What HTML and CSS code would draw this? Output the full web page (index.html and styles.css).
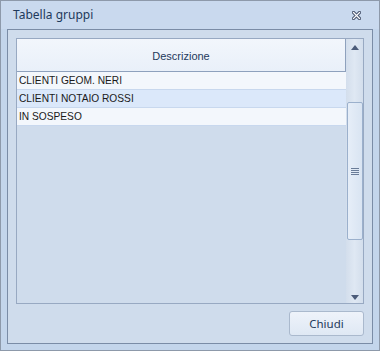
FILE: index.html
```html
<!doctype html>
<html>
	<head>
		<title>Tabella gruppi</title>
		<link rel="stylesheet" href="styles.css">
	</head>
	<body>
		<div class='window'>
			<div class='titlebar'>
				<span class='caption'>Tabella gruppi</span>
				<svg class='close' width='9' height='9' viewBox='0 0 9 9'>
					<path d='M1.5 1.5 L7.5 7.5 M7.5 1.5 L1.5 7.5' stroke='#4a5670' stroke-width='3.2' stroke-linecap='square'/>
					<path d='M1.5 1.5 L7.5 7.5 M7.5 1.5 L1.5 7.5' stroke='#ffffff' stroke-width='1.2' stroke-linecap='square'/>
				</svg>
			</div>
			<div class='panel'>
				<div class='grid'>
					<div class='list'>
						<div class='header'>Descrizione</div>
						<div class='row'>CLIENTI GEOM. NERI</div>
						<div class='row selected'>CLIENTI NOTAIO ROSSI</div>
						<div class='row'>IN SOSPESO</div>
					</div>
					<div class='scrollbar'>
						<div class='arrow up'></div>
						<div class='track'>
							<div class='thumb'>
								<div class='grip'></div>
							</div>
						</div>
						<div class='arrow down'></div>
					</div>
				</div>
				<div class='footer'>
					<div class='button'>Chiudi</div>
				</div>
			</div>
		</div>
	</body>
</html>
```

FILE: styles.css
```css
body {
	margin : 0;
	font-family : "Liberation Sans", Arial, sans-serif;
}
.window {
	width : 380px;
	height : 351px;
	box-sizing : border-box;
	border : 1px solid #8d99aa;
	background-color : #c3d5eb;
	display : flex;
	flex-direction : column;
}
.titlebar {
	height : 28px;
	flex-shrink : 0;
	display : flex;
	align-items : center;
	justify-content : space-between;
	padding : 0 18px 0 12px;
	background-color : #c9d9ee;
}
.caption {
	font-family : "Noto Sans", sans-serif;
	font-size : 12px;
	color : #1e395b;
	margin-top : -1px;
}
.close {
	display : block;
	margin-top : 1px;
}
.panel {
	height : 315px;
	box-sizing : border-box;
	margin : 0 6px;
	border : 1px solid #7a8ca6;
	background-color : #cfdcec;
	padding : 8px 8px 0 8px;
	display : flex;
	flex-direction : column;
}
.grid {
	height : 266px;
	box-sizing : border-box;
	border : 1px solid #98a9c2;
	display : flex;
}
.list {
	flex-grow : 1;
	display : flex;
	flex-direction : column;
}
.header {
	height : 33px;
	box-sizing : border-box;
	border-right : 1px solid #8ea1bd;
	border-bottom : 1px solid #8ea1bd;
	background : linear-gradient(#f2f6fc, #e9f0f9);
	font-size : 11px;
	color : #1e395b;
	display : flex;
	align-items : center;
	justify-content : center;
	padding-top : 1px;
}
.row {
	height : 18px;
	box-sizing : border-box;
	border-bottom : 1px solid #c8d8ee;
	background-color : #f3f7fc;
	font-size : 10.2px;
	color : #1a1a1a;
	padding-left : 2px;
	line-height : 17px;
}
.row.selected {
	background-color : #dbe8fa;
}
.scrollbar {
	width : 17px;
	flex-shrink : 0;
	display : flex;
	flex-direction : column;
	background : linear-gradient(to right, #d3deec, #dfe8f3 50%, #d3deec);
}
.arrow {
	height : 17px;
	flex-shrink : 0;
	display : flex;
	align-items : center;
	justify-content : center;
}
.arrow::after {
	content : '';
	width : 0;
	height : 0;
	border-left : 4px solid transparent;
	border-right : 4px solid transparent;
}
.arrow.up::after {
	border-bottom : 5px solid #4c5c7a;
	margin-top : -1px;
}
.arrow.down::after {
	border-top : 5px solid #4c5c7a;
	margin-top : 5px;
}
.track {
	flex-grow : 1;
	padding-top : 46px;
	padding-bottom : 46px;
	display : flex;
}
.thumb {
	flex-grow : 1;
	margin-left : 1px;
	border : 1px solid #9bb0cc;
	border-radius : 2px;
	background : linear-gradient(to right, #e6eef8, #d9e4f2);
	display : flex;
	align-items : center;
	justify-content : center;
}
.grip {
	width : 8px;
	height : 7px;
	background : repeating-linear-gradient(#6a7c98 0 1px, transparent 1px 2px);
}
.footer {
	display : flex;
	justify-content : flex-end;
	padding-top : 7px;
}
.button {
	width : 75px;
	height : 25px;
	box-sizing : border-box;
	border : 1px solid #aab9cd;
	border-radius : 3px;
	background : linear-gradient(#eef3fa, #dfe8f4);
	font-family : "Noto Sans", sans-serif;
	font-size : 11.5px;
	color : #1e395b;
	display : flex;
	align-items : center;
	justify-content : center;
}
```
